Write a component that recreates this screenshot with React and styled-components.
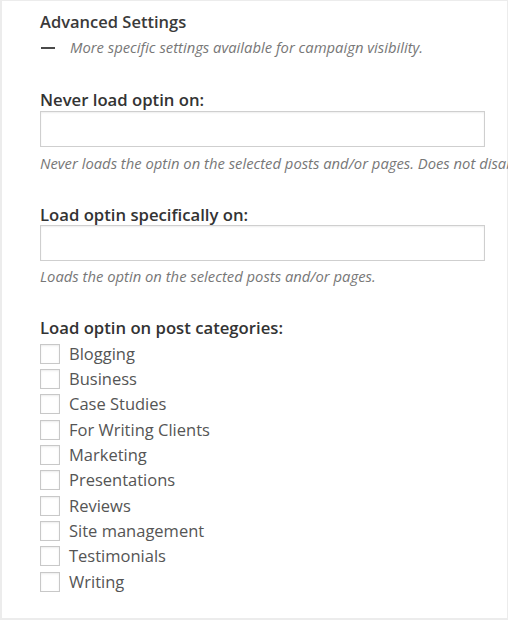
import styled, { createGlobalStyle } from "styled-components";

const GlobalStyle = createGlobalStyle`
  html, body {
    margin: 0;
    padding: 0;
    background: #ececec;
    overflow: hidden;
  }
  body {
    font-family: "Open Sans", "Noto Sans", "Liberation Sans", sans-serif;
  }
`;

const Panel = styled.div`
  box-sizing: border-box;
  margin: 1px 1px 0 2px;
  height: 617px;
  background: #fff;
  padding: 10px 0 0 38px;
`;

const Title = styled.h3`
  margin: 0;
  font-size: 16.5px;
  font-weight: 600;
  line-height: 22px;
  color: #3a3a3a;
`;

const Subtitle = styled.div`
  display: flex;
  align-items: center;
  margin-top: 4px;
  height: 20px;
`;

const Dash = styled.span`
  display: block;
  width: 14px;
  height: 2px;
  background: #4a4a4a;
  margin: 1px 15px 0 1px;
`;

const Hint = styled.p`
  margin: ${(p) => p.$margin || "0"};
  font-size: 14.8px;
  font-style: italic;
  line-height: 20px;
  color: #777;
  white-space: nowrap;
`;

const Field = styled.div`
  margin-top: ${(p) => p.$top}px;
`;

const Label = styled.label`
  display: block;
  margin: 0 0 ${(p) => p.$gap || 0}px 0;
  font-size: 16.7px;
  font-weight: 600;
  line-height: 22px;
  color: #333;
`;

const TextInput = styled.input`
  box-sizing: border-box;
  display: block;
  width: 445px;
  height: 36px;
  margin: 0;
  border: 1px solid #cfcfcf;
  box-shadow: inset 0 1px 2px rgba(0, 0, 0, 0.07);
  background: #fff;
  outline: none;
`;

const List = styled.ul`
  list-style: none;
  margin: 0;
  padding: 0;
`;

const Item = styled.li`
  display: flex;
  align-items: center;
  height: 25.33px;
`;

const Box = styled.span`
  box-sizing: border-box;
  width: 20px;
  height: 20px;
  border: 1px solid #c8c8c8;
  box-shadow: inset 0 1px 2px rgba(0, 0, 0, 0.08);
  margin-right: 9px;
  background: #fff;
`;

const ItemText = styled.span`
  font-size: 16.5px;
  line-height: 20px;
  color: #555;
`;

const categories = [
  "Blogging",
  "Business",
  "Case Studies",
  "For Writing Clients",
  "Marketing",
  "Presentations",
  "Reviews",
  "Site management",
  "Testimonials",
  "Writing",
];

export default function App() {
  return (
    <>
      <GlobalStyle />
      <Panel>
        <Title>Advanced Settings</Title>
        <Subtitle>
          <Dash />
          <Hint>More specific settings available for campaign visibility.</Hint>
        </Subtitle>

        <Field $top={32}>
          <Label>Never load optin on:</Label>
          <TextInput type="text" />
          <Hint $margin="6px 0 0 0">
            Never loads the optin on the selected posts and/or pages. Does not disable the optin globally.
          </Hint>
        </Field>

        <Field $top={31}>
          <Label $gap={-1}>Load optin specifically on:</Label>
          <TextInput type="text" />
          <Hint $margin="5px 0 0 0">Loads the optin on the selected posts and/or pages.</Hint>
        </Field>

        <Field $top={31}>
          <Label $gap={2}>Load optin on post categories:</Label>
          <List>
            {categories.map((c) => (
              <Item key={c}>
                <Box />
                <ItemText>{c}</ItemText>
              </Item>
            ))}
          </List>
        </Field>
      </Panel>
    </>
  );
}
